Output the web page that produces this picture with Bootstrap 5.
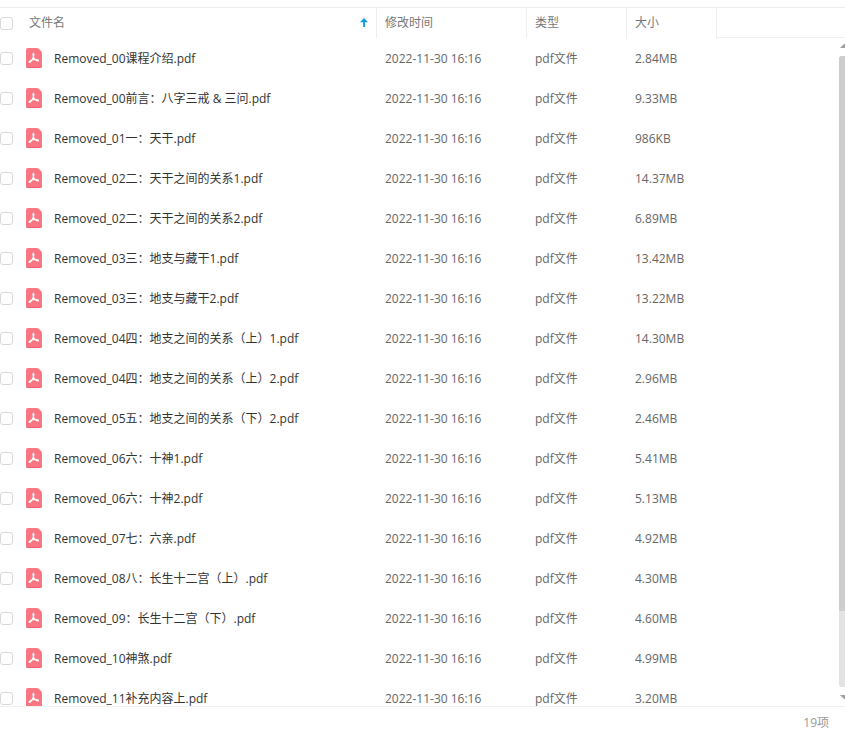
<!DOCTYPE html>
<html lang="zh-CN">
<head>
<meta charset="utf-8">
<meta name="viewport" content="width=device-width, initial-scale=1">
<title>文件列表</title>
<link href="https://cdn.jsdelivr.net/npm/bootstrap@5.3.0/dist/css/bootstrap.min.css" rel="stylesheet">
<style>
body { font-family: "Open Sans", "Noto Sans CJK SC", sans-serif; font-size: 12px; line-height: 18px; color: #666; background: #fff; }
.list-top { height: 8px; border-bottom: 1px solid #ececec; }
.file-table { table-layout: fixed; border-collapse: separate; border-spacing: 0; color: #666; }
.file-table > :not(caption) > * > * { color: inherit; background: none; box-shadow: none; border: 0; padding: 0 8px; vertical-align: middle; }
.file-table thead th { height: 30px; font-weight: 400; color: #777; border-right: 1px solid #eee; }
.file-table thead th:last-child { border-right: 0; border-bottom: 1px solid #f0f0f0; }
.file-table tbody td { height: 40px; white-space: nowrap; }
.file-table tbody td + td { padding-top: 2px; }
.file-table > :not(caption) > tr > :first-child { padding-left: 0; }
.w-name { width: 377px; }
.w-time { width: 150px; }
.w-type { width: 100px; }
.w-size { width: 90px; }
.file-table .form-check-input { width: 13px; height: 13px; margin: 0; border: 1px solid #d9d9d9; border-radius: 3px; flex: none; }
.sort-btn { color: #1296e8; line-height: 0; }
.head-label { margin-left: 16px; }
.file-name { color: #333; margin-left: 12px; padding-top: 2px; cursor: pointer; }
.pdf-icon { margin-left: 13px; flex: none; }
.list-foot { height: 32px; border-top: 1px solid #f0f0f0; color: #999; padding-right: 16px; }
.scroll-rail { top: 34px; right: 0; bottom: 5px; width: 6px; }
.scroll-track { background: #e3e3e3; border-radius: 3px 0 0 3px; }
.scroll-thumb { height: 88%; background: #cdcdcd; border-radius: 3px 0 0 0; }
</style>
</head>
<body>
<svg class="d-none" aria-hidden="true">
  <symbol id="pdf" viewBox="0 0 16 20">
    <path fill="#fb7583" d="M2 0h8.500q1.500 0 2.500 1l2 2q1 1 1 2.500V18a2 2 0 0 1-2 2H2a2 2 0 0 1-2-2V2a2 2 0 0 1 2-2z"/>
    <path fill="#f25f71" d="M0 17v1a2 2 0 0 0 2 2h12a2 2 0 0 0 2-2v-1a2 2 0 0 1-2 2H2a2 2 0 0 1-2-2z"/>
    <path fill="none" stroke="#fff" stroke-width="1.100" stroke-linecap="round" stroke-linejoin="round" d="M7.200 5.200c1.200.6.500 3.400-.5 5.400-.8 1.700-1.900 3.500-2.900 3.800-.9.200-.9-1 .4-1.700 1.900-1.100 4.400-1.500 6.500-1.200 1.700.2 2.200 1.100 1.400 1.400-1.400.4-4.200-1.900-4.900-4.400-.3-1.300-.5-2.900 0-3.300z"/>
  </symbol>
</svg>
<main class="d-flex flex-column vh-100 overflow-hidden">
  <div class="list-top flex-shrink-0"></div>
  <section class="position-relative flex-grow-1 overflow-hidden">
    <table class="table file-table w-100 mb-0">
      <thead>
        <tr>
          <th class="w-name" scope="col" aria-sort="ascending">
            <div class="d-flex align-items-center">
              <input class="form-check-input" type="checkbox" aria-label="全选">
              <span class="head-label">文件名</span>
              <button class="sort-btn btn p-0 border-0 ms-auto" type="button" aria-label="按文件名排序">
                <svg width="8" height="10" viewBox="0 0 8 10"><path fill="currentColor" d="M4 0l4 4.200H5V9H3.200V4.200H0z"/></svg>
              </button>
            </div>
          </th>
          <th class="w-time" scope="col">修改时间</th>
          <th class="w-type" scope="col">类型</th>
          <th class="w-size" scope="col">大小</th>
          <th scope="col"></th>
        </tr>
      </thead>
      <tbody id="files"></tbody>
    </table>
    <div class="scroll-rail position-absolute d-flex flex-column" aria-hidden="true">
      <svg width="6" height="6" viewBox="0 0 6 6"><path fill="#a0a0a0" d="M1 6l4-4h1v4z"/></svg>
      <div class="scroll-track flex-grow-1 my-2"><div class="scroll-thumb"></div></div>
      <svg width="6" height="6" viewBox="0 0 6 6"><path fill="#a0a0a0" d="M1 0l4 4h1V0z"/></svg>
    </div>
  </section>
  <footer class="list-foot d-flex align-items-center justify-content-end flex-shrink-0">19项</footer>
</main>
<script src="https://cdn.jsdelivr.net/npm/bootstrap@5.3.0/dist/js/bootstrap.bundle.min.js"></script>
<script>
const files = [
  ["Removed_00课程介绍.pdf", "2.84MB"],
  ["Removed_00前言：八字三戒 & 三问.pdf", "9.33MB"],
  ["Removed_01一：天干.pdf", "986KB"],
  ["Removed_02二：天干之间的关系1.pdf", "14.37MB"],
  ["Removed_02二：天干之间的关系2.pdf", "6.89MB"],
  ["Removed_03三：地支与藏干1.pdf", "13.42MB"],
  ["Removed_03三：地支与藏干2.pdf", "13.22MB"],
  ["Removed_04四：地支之间的关系（上）1.pdf", "14.30MB"],
  ["Removed_04四：地支之间的关系（上）2.pdf", "2.96MB"],
  ["Removed_05五：地支之间的关系（下）2.pdf", "2.46MB"],
  ["Removed_06六：十神1.pdf", "5.41MB"],
  ["Removed_06六：十神2.pdf", "5.13MB"],
  ["Removed_07七：六亲.pdf", "4.92MB"],
  ["Removed_08八：长生十二宫（上）.pdf", "4.30MB"],
  ["Removed_09：长生十二宫（下）.pdf", "4.60MB"],
  ["Removed_10神煞.pdf", "4.99MB"],
  ["Removed_11补充内容上.pdf", "3.20MB"]
];
const body = document.getElementById("files");
files.forEach(([name, size], i) => {
  const row = body.insertRow();
  row.innerHTML = `<td><div class="d-flex align-items-center">
    <input class="form-check-input" type="checkbox" id="file-${i}">
    <svg class="pdf-icon" width="16" height="20" aria-hidden="true"><use href="#pdf"/></svg>
    <label class="file-name" for="file-${i}"></label></div></td>
    <td>2022-11-30 16:16</td><td>pdf文件</td><td>${size}</td><td></td>`;
  row.querySelector("label").textContent = name;
});
</script>
</body>
</html>
